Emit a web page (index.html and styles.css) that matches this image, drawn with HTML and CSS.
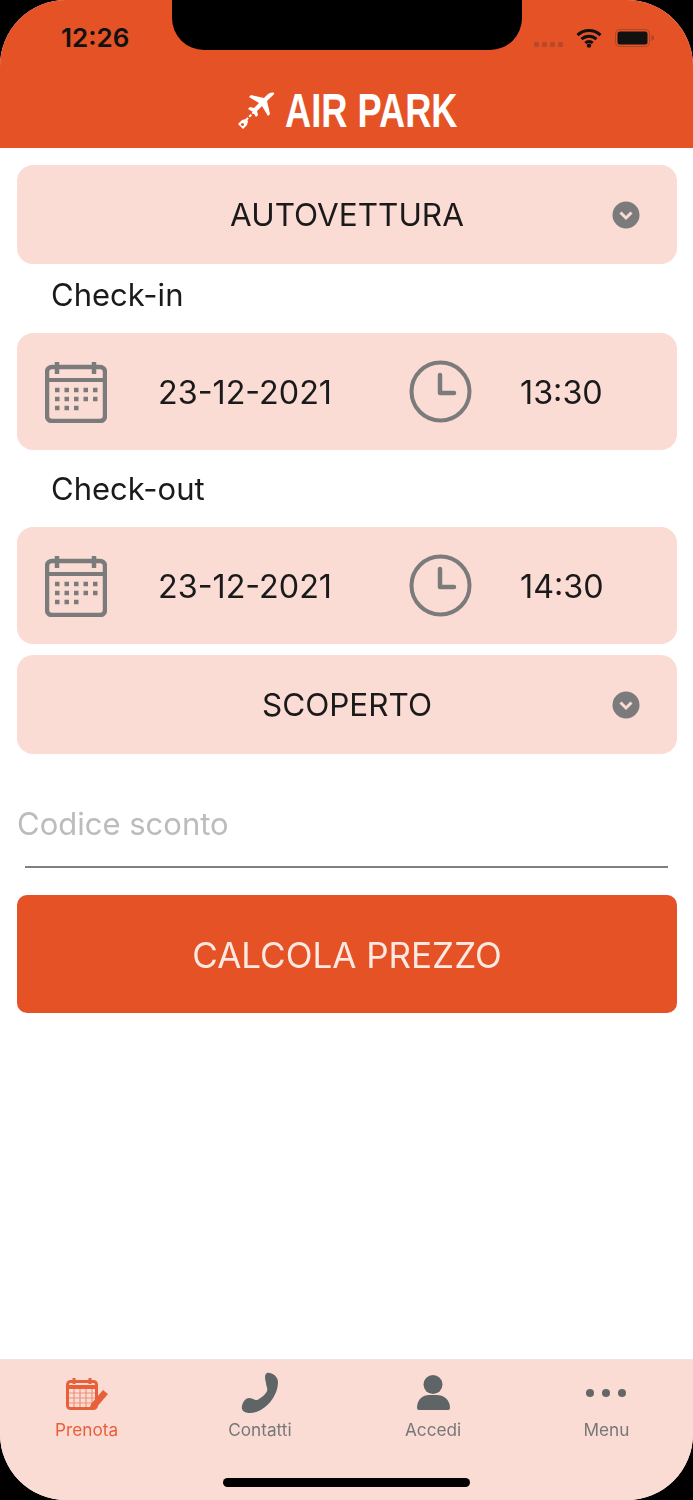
FILE: index.html
```html
<!DOCTYPE html>
<html lang="it">
<head>
    <meta charset="UTF-8">
    <meta name="viewport" content="width=device-width, initial-scale=1.0">
    <title>Air Park</title>
    <link rel="stylesheet" href="styles.css">
</head>
<body>
    <div class="screen">
        <!-- Notch del telefono -->
        <div class="notch"></div>

        <header class="header">
            <div class="status">
                <span class="time">12:26</span>
                <div class="status-icons">
                    <svg class="signal" viewBox="0 0 30 6"><g fill="#b5492a"><rect y="1" width="5" height="5" rx="1.5"/><rect x="8" y="1" width="5" height="5" rx="1.5"/><rect x="16" y="1" width="5" height="5" rx="1.5"/><rect x="24" y="1" width="5" height="5" rx="1.5"/></g></svg>
                    <svg class="wifi" viewBox="0 0 26 20"><path d="M1.5 7.2a16.5 16.5 0 0 1 23 0M5.5 11.2a11 11 0 0 1 15 0M9.3 15a5.5 5.5 0 0 1 7.4 0" fill="none" stroke="#111" stroke-width="3"/><circle cx="13" cy="17.6" r="2.2" fill="#111"/></svg>
                    <svg class="battery" viewBox="0 0 40 18"><rect x="0.5" y="0.5" width="34" height="17" rx="4" fill="none" stroke="#a8482b"/><rect x="2.5" y="2.5" width="30" height="13" rx="2.5" fill="#111"/><path d="M36.5 6c1.6.5 2.5 1.6 2.5 3s-.9 2.500-2.500 3z" fill="#a8482b"/></svg>
                </div>
            </div>
            <div class="logo">
                <svg class="logo-icon" viewBox="0 0 38 38">
                    <g fill="#fff">
                        <path d="M37 1c-2-1-5 0-7 2l-3 3-13-3-2 2 10 6-5 5-4-1-2 2 5 3 3 5 2-2-1-4 5-5 6 10 2-2-3-13 3-3c2-2 5-4 4-5z"/>
                        <path d="M5 28l4-1 2 2-1 4-4 4-5-5z"/>
                    </g>
                    <path d="M9 28l9-9" stroke="#fff" stroke-width="2" stroke-dasharray="3 1.500"/>
                    <circle cx="5.500" cy="32.500" r="1.500" fill="#e55225"/>
                </svg>
                <span class="logo-text">AIR PARK</span>
            </div>
        </header>

        <main class="content">
            <div class="select">
                <span class="select-text">AUTOVETTURA</span>
                <svg class="chevron" viewBox="0 0 28 28"><circle cx="14" cy="14" r="13.500" fill="#7b7b7b"/><path d="M8.500 11.500l5.500 5.500 5.500-5.500" fill="none" stroke="#fadcd5" stroke-width="3"/></svg>
            </div>

            <div class="label">Check-in</div>
            <div class="date-row">
                <svg class="icon-cal" viewBox="0 0 62 62"><use href="#calendario"/></svg>
                <span class="date">23-12-2021</span>
                <svg class="icon-clock" viewBox="0 0 63 63"><use href="#orologio"/></svg>
                <span class="hour">13:30</span>
            </div>

            <div class="label label-second">Check-out</div>
            <div class="date-row">
                <svg class="icon-cal" viewBox="0 0 62 62"><use href="#calendario"/></svg>
                <span class="date">23-12-2021</span>
                <svg class="icon-clock" viewBox="0 0 63 63"><use href="#orologio"/></svg>
                <span class="hour">14:30</span>
            </div>

            <div class="select select-second">
                <span class="select-text">SCOPERTO</span>
                <svg class="chevron" viewBox="0 0 28 28"><circle cx="14" cy="14" r="13.500" fill="#7b7b7b"/><path d="M8.500 11.500l5.500 5.500 5.500-5.500" fill="none" stroke="#fadcd5" stroke-width="3"/></svg>
            </div>

            <div class="discount">Codice sconto</div>
            <div class="discount-line"></div>

            <button class="calc">CALCOLA PREZZO</button>
        </main>

        <nav class="tabbar">
            <div class="tabs">
                <div class="tab tab-active">
                    <svg class="tab-icon" viewBox="0 0 44 38">
                        <g transform="translate(1 4)">
                            <rect x="1.500" y="4.500" width="29" height="27" rx="3" fill="none" stroke="#e8603a" stroke-width="3"/>
                            <path d="M1.500 10h29" stroke="#e8603a" stroke-width="4"/>
                            <path d="M8 1v6M24 1v6" stroke="#e8603a" stroke-width="3"/>
                            <path d="M3 16h26M3 21h26M3 26h26M8 12v18M14 12v18M20 12v18M26 12v18" stroke="#e8603a" stroke-width="1.200" opacity=".6"/>
                            <path d="M23 33l2-6 12-14 5 4-12 14z" fill="#e8603a"/>
                        </g>
                    </svg>
                    <span>Prenota</span>
                </div>
                <div class="tab">
                    <svg class="tab-icon" viewBox="0 0 44 38"><path d="M29 0C33-1 40 3 40 9 40 24 26 40 12 40 6 40 3 37 4 33 5 28 8 25 11 25 14 25 16 27 19 27 22 26 28 21 29 18 30 15 28 13 28 10 27 6 26 2 29 0z" fill="#5f6566"/></svg>
                    <span>Contatti</span>
                </div>
                <div class="tab">
                    <svg class="tab-icon" viewBox="0 0 44 38"><circle cx="22" cy="11.500" r="9.500" fill="#5f6566"/><path d="M6 35C6 26 12 22 18 22H26C32 22 39 26 39 35Q39 37 37 37H8Q6 37 6 35z" fill="#5f6566"/></svg>
                    <span>Accedi</span>
                </div>
                <div class="tab">
                    <svg class="tab-icon" viewBox="0 0 44 38"><g fill="#666"><circle cx="6" cy="20" r="4"/><circle cx="22" cy="20" r="4"/><circle cx="38" cy="20" r="4"/></g></svg>
                    <span>Menu</span>
                </div>
            </div>
            <div class="home-bar"></div>
        </nav>
    </div>

    <!-- Icone riutilizzate nelle righe data/ora -->
    <svg class="defs" width="0" height="0">
        <symbol id="calendario" viewBox="0 0 62 62">
            <rect x="2" y="6" width="58" height="54" rx="5" fill="none" stroke="#7b7b7b" stroke-width="4.500"/>
            <path d="M2 19h58" stroke="#7b7b7b" stroke-width="4"/>
            <path d="M12 1v12M49 1v12" stroke="#7b7b7b" stroke-width="4.500"/>
            <path d="M10 29h44M10 38h44" stroke="#7b7b7b" stroke-width="4.500" stroke-dasharray="4.500 5"/>
            <path d="M10 47h26" stroke="#7b7b7b" stroke-width="4.500" stroke-dasharray="4.500 5"/>
        </symbol>
        <symbol id="orologio" viewBox="0 0 63 63">
            <circle cx="31.500" cy="31.500" r="29" fill="none" stroke="#7b7b7b" stroke-width="4"/>
            <path d="M31 15v18h14" fill="none" stroke="#7b7b7b" stroke-width="4.500" stroke-linecap="round" stroke-linejoin="round"/>
        </symbol>
    </svg>
</body>
</html>
```

FILE: styles.css
```css
/* Base della pagina */
html, body {
    margin: 0;
    background-color: #000;
}

.defs {
    position: absolute;
}

/* Schermo del telefono */
.screen {
    position: relative;
    width: 693px;
    height: 1500px;
    border-radius: 66px;
    overflow: hidden;
    background-color: #fff;
    display: flex;
    flex-direction: column;
    font-family: Inter, "Liberation Sans", sans-serif;
    color: #1a1a1a;
    filter: blur(0.6px);
}

.notch {
    position: absolute;
    top: 0;
    left: 172px;
    width: 350px;
    height: 50px;
    background-color: #000;
    border-radius: 0 0 32px 32px;
}

/* Barra superiore */
.header {
    height: 148px;
    flex-shrink: 0;
    background-color: #e55225;
    display: flex;
    flex-direction: column;
}

.status {
    height: 82px;
    padding: 18px 38px 0 61px;
    box-sizing: border-box;
    display: flex;
    justify-content: space-between;
}

.time {
    font-size: 26px;
    line-height: 40px;
    font-weight: 600;
    color: #111;
}

.status-icons {
    display: flex;
    align-items: center;
    height: 40px;
}

.signal {
    width: 30px;
    height: 6px;
    margin: 12px 12px 0 0;
}

.wifi {
    width: 26px;
    height: 20px;
    margin-right: 13px;
}

.battery {
    width: 40px;
    height: 18px;
}

.logo {
    display: flex;
    justify-content: center;
    align-items: center;
    gap: 10px;
}

.logo-icon {
    width: 38px;
    height: 38px;
}

.logo-text {
    width: 172px;
    font-family: "Liberation Sans", sans-serif;
    font-size: 48px;
    line-height: 58px;
    font-weight: 700;
    color: #fff;
    white-space: nowrap;
    transform: scaleX(0.755);
    transform-origin: left center;
}

/* Contenuto */
.content {
    flex: 1;
    padding: 17px 16px 0 17px;
}

.select {
    height: 99px;
    padding: 0 37px 0 0;
    box-sizing: border-box;
    background-color: #fadcd5;
    border-radius: 16px;
    display: grid;
    grid-template-columns: 1fr auto 1fr;
    align-items: center;
}

.select-second {
    margin-top: 11px;
}

.select-text {
    grid-column: 2;
    font-size: 31.500px;
    margin-left: 37px;
}

.chevron {
    grid-column: 3;
    justify-self: end;
    width: 28px;
    height: 28px;
}

.label {
    height: 69px;
    padding-left: 34px;
    font-size: 31px;
    line-height: 62px;
}

.label-second {
    height: 77px;
    line-height: 78px;
}

.date-row {
    height: 117px;
    padding-left: 28px;
    background-color: #fadcd5;
    border-radius: 16px;
    display: flex;
    align-items: center;
    font-size: 32.300px;
}

.icon-cal {
    width: 62px;
    height: 62px;
}

.icon-clock {
    width: 63px;
    height: 63px;
}

.date {
    width: 251px;
    margin-left: 51px;
    padding-top: 2px;
}

.hour {
    margin-left: 48px;
    padding-top: 2px;
}

.discount {
    margin: 50px 0 0;
    font-size: 31px;
    line-height: 40px;
    color: #bcbcbc;
}

.discount-line {
    height: 2px;
    margin: 22px 9px 0 8px;
    background-color: #808080;
}

.calc {
    display: block;
    width: 100%;
    height: 118px;
    margin-top: 27px;
    padding-top: 3px;
    background-color: #e55225;
    color: #fde9e2;
    border: none;
    border-radius: 10px;
    font-family: inherit;
    font-size: 35px;
}

/* Barra delle schede */
.tabbar {
    height: 141px;
    flex-shrink: 0;
    background-color: #fadcd5;
    border-top: 1px solid #efe3e0;
    box-sizing: border-box;
    display: flex;
    flex-direction: column;
    align-items: center;
}

.tabs {
    width: 100%;
    display: grid;
    grid-template-columns: repeat(4, 1fr);
    padding-top: 13px;
}

.tab {
    display: flex;
    flex-direction: column;
    align-items: center;
    font-size: 17.200px;
    line-height: 22px;
    color: #777;
}

.tab-active {
    color: #e8603a;
}

.tab-icon {
    width: 44px;
    height: 38px;
    margin-bottom: 8px;
    overflow: visible;
}

.home-bar {
    width: 247px;
    height: 9px;
    margin-top: 37px;
    background-color: #000;
    border-radius: 5px;
}
```
